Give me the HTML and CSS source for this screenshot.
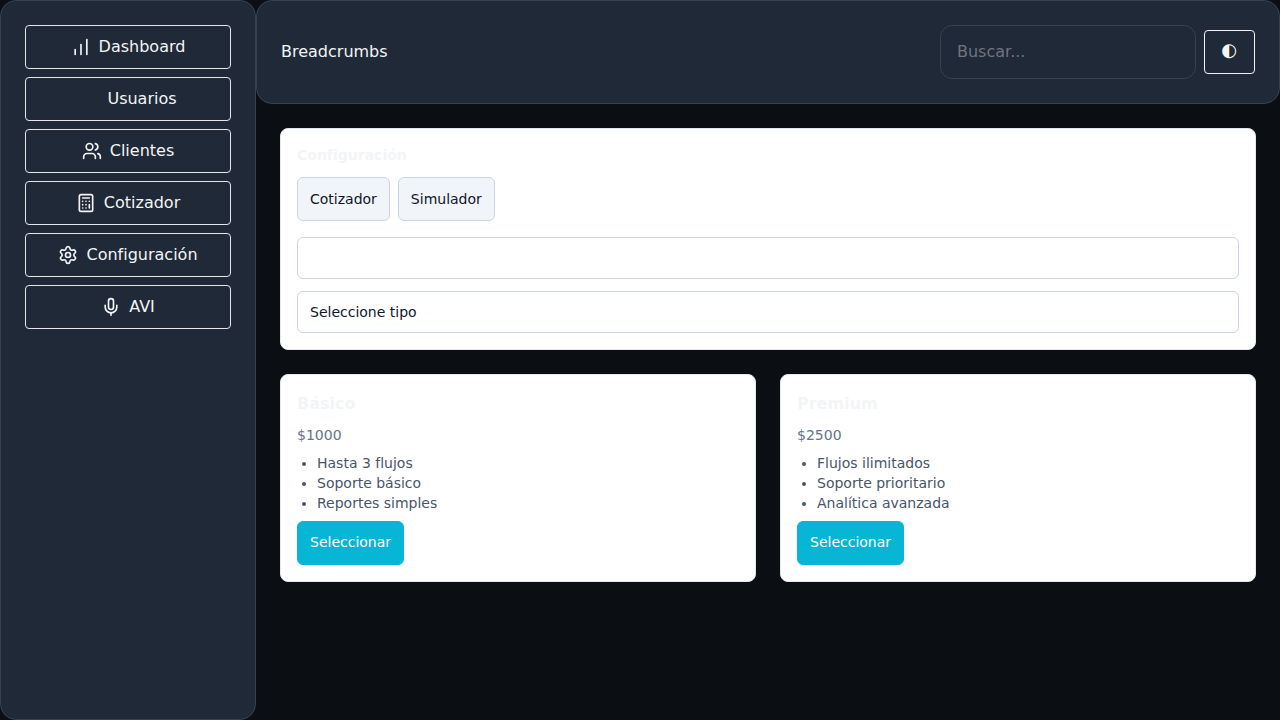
FILE: index.html
```html
<!DOCTYPE html>
<html lang="es">
<head>
<meta charset="utf-8">
<title>Configuración</title>
<link rel="stylesheet" href="styles.css">
</head>
<body>
<div class="app">
  <aside class="sidebar">
    <a class="nav-btn"><svg class="icon" viewBox="0 0 24 24"><path d="M5 21v-6"/><path d="M12 21V9"/><path d="M19 21V3"/></svg><span>Dashboard</span></a>
    <a class="nav-btn"><svg class="icon" viewBox="0 0 24 24"></svg><span>Usuarios</span></a>
    <a class="nav-btn"><svg class="icon" viewBox="0 0 24 24"><path d="M16 21v-2a4 4 0 0 0-4-4H6a4 4 0 0 0-4 4v2"/><path d="M16 3.128a4 4 0 0 1 0 7.744"/><path d="M22 21v-2a4 4 0 0 0-3-3.87"/><circle cx="9" cy="7" r="4"/></svg><span>Clientes</span></a>
    <a class="nav-btn"><svg class="icon" viewBox="0 0 24 24"><rect width="16" height="20" x="4" y="2" rx="2"/><path d="M8 6h8M16 14v4M16 10h.01M12 10h.01M8 10h.01M12 14h.01M8 14h.01M12 18h.01M8 18h.01"/></svg><span>Cotizador</span></a>
    <a class="nav-btn"><svg class="icon" viewBox="0 0 24 24"><path d="M9.671 4.136a2.34 2.34 0 0 1 4.659 0 2.34 2.34 0 0 0 3.319 1.915 2.34 2.34 0 0 1 2.33 4.033 2.34 2.34 0 0 0 0 3.831 2.34 2.34 0 0 1-2.33 4.033 2.34 2.34 0 0 0-3.319 1.915 2.34 2.34 0 0 1-4.659 0 2.34 2.34 0 0 0-3.32-1.915 2.34 2.34 0 0 1-2.33-4.033 2.34 2.34 0 0 0 0-3.831A2.34 2.34 0 0 1 6.35 6.051a2.34 2.34 0 0 0 3.319-1.915"/><circle cx="12" cy="12" r="3"/></svg><span>Configuración</span></a>
    <a class="nav-btn"><svg class="icon" viewBox="0 0 24 24"><path d="M12 19v3"/><path d="M19 10v2a7 7 0 0 1-14 0v-2"/><rect x="9" y="2" width="6" height="13" rx="3"/></svg><span>AVI</span></a>
  </aside>
  <div class="content">
    <header class="topbar">
      <div>Breadcrumbs</div>
      <div class="tools">
        <input class="search" placeholder="Buscar...">
        <button class="theme-btn">◐</button>
      </div>
    </header>
    <main class="main">
      <section class="card">
        <h2 class="card-title">Configuración</h2>
        <div class="tabs"><button class="tab">Cotizador</button><button class="tab">Simulador</button></div>
        <div class="fields">
          <div class="field"></div>
          <div class="field">Seleccione tipo</div>
        </div>
      </section>
      <div class="plans">
        <section class="card">
          <h3 class="plan-title">Básico</h3>
          <p class="price">$1000</p>
          <ul class="features"><li>Hasta 3 flujos</li><li>Soporte básico</li><li>Reportes simples</li></ul>
          <button class="select-btn">Seleccionar</button>
        </section>
        <section class="card">
          <h3 class="plan-title">Premium</h3>
          <p class="price">$2500</p>
          <ul class="features"><li>Flujos ilimitados</li><li>Soporte prioritario</li><li>Analítica avanzada</li></ul>
          <button class="select-btn">Seleccionar</button>
        </section>
      </div>
    </main>
  </div>
</div>
</body>
</html>
```
FILE: styles.css
```css
*{box-sizing:border-box}
body{margin:0;background:#0b0f14;color:#f3f4f6;font:16px/24px "DejaVu Sans",sans-serif}
h2,h3,p,ul{margin:0;padding:0}
button,input{font:inherit;color:inherit;margin:0}
.app{display:flex;height:720px}
.sidebar{width:256px;flex:none;display:flex;flex-direction:column;gap:8px;padding:24px;background:#1f2937;border:1px solid #374151;border-radius:16px}
.nav-btn{display:flex;align-items:center;justify-content:center;gap:8px;height:44px;padding-bottom:1px;border:1px solid #e5e7eb;border-radius:4px}
.icon{width:20px;height:20px;flex:none;position:relative;top:.5px;fill:none;stroke:currentColor;stroke-width:2;stroke-linecap:round;stroke-linejoin:round}
.content{flex:1;min-width:0}
.topbar{display:flex;align-items:center;justify-content:space-between;height:104px;padding:24px;background:#1f2937;border:1px solid #374151;border-radius:16px}
.tools{display:flex;align-items:center;gap:8px}
.search{width:256px;height:54px;padding:0 16px 2px;background:transparent;border:1px solid #374151;border-radius:12px}
.search::placeholder{color:#6f7580;opacity:1}
.theme-btn{height:44px;width:51px;padding:0 1px 5px 0;background:transparent;border:1px solid #f3f4f6;border-radius:4px;font-size:18px}
.main{display:flex;flex-direction:column;gap:24px;padding:24px}
.card{padding:16px;background:#fff;border:1px solid #e2e8f0;border-radius:8px}
.card-title{font-size:14px;line-height:20px}
.tabs{display:flex;gap:8px;margin-top:12px}
.tab,.select-btn{height:44px;padding:0 12px;border:1px solid #cbd5e1;border-radius:6px;background:#f1f5f9;color:#0f172a;font-size:14px;line-height:20px}
.fields{display:flex;flex-direction:column;gap:12px;margin-top:16px}
.field{height:42px;padding:10px 12px;border:1px solid #cbd5e1;border-radius:6px;color:#0f172a;font-size:14px;line-height:20px}
.plans{display:grid;grid-template-columns:1fr 1fr;gap:24px}
.plan-title{font-size:16px;line-height:26px}
.price{margin-top:8px;font-size:14px;line-height:20px;color:#64748b}
.features{margin-top:8px;padding-left:20px;font-size:14px;line-height:20px;color:#475569}
.select-btn{display:block;margin-top:8px;padding-bottom:2px;background:#06b6d4;border-color:#06b6d4;color:#fff}
```
